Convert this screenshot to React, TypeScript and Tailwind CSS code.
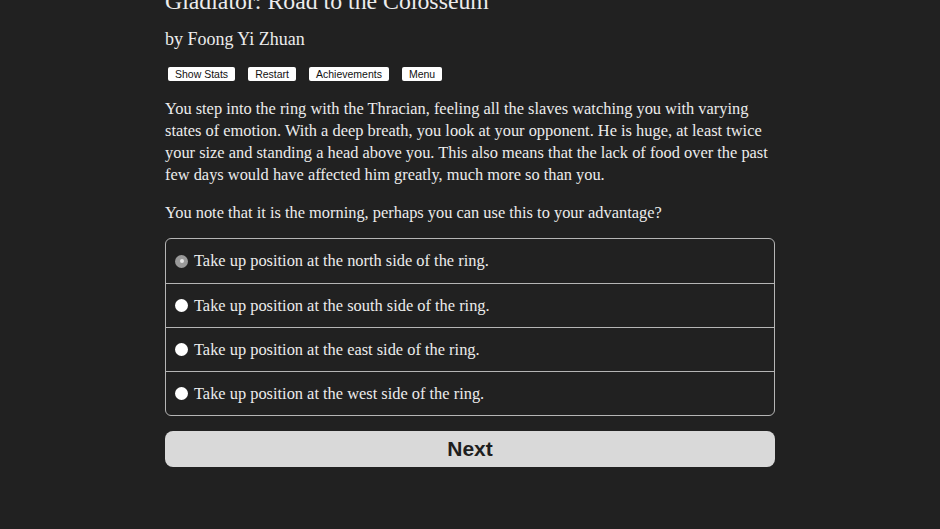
import { useState } from "react";

const options = [
    "Take up position at the north side of the ring.",
    "Take up position at the south side of the ring.",
    "Take up position at the east side of the ring.",
    "Take up position at the west side of the ring.",
];

const serif = { fontFamily: '"Liberation Serif", "DejaVu Serif", serif' };

export default function App() {
    const [selected, setSelected] = useState(0);

    return (
        <div className="w-[940px] h-[529px] overflow-hidden bg-[#212121] text-[#ececec]" style={serif}>
            <div className="w-[610px] ml-[165px] -mt-[13px]">
                <h1 className="text-[23.8px] leading-[28px]">Gladiator: Road to the Colosseum</h1>
                <h2 className="text-[18px] leading-[22px] mt-[13px]">by Foong Yi Zhuan</h2>

                {/* top buttons */}
                <div className="flex gap-[13px] mt-[17px] ml-[3px] font-['Liberation_Sans',Arial,sans-serif]">
                    {["Show Stats", "Restart", "Achievements", "Menu"].map((b) => (
                        <button
                            key={b}
                            className="bg-white text-[#111] text-[10.5px] leading-[14px] px-[7px] rounded-[2px]"
                        >
                            {b}
                        </button>
                    ))}
                </div>

                <p className="text-[16.4px] leading-[22px] mt-[17px]">
                    You step into the ring with the Thracian, feeling all the slaves watching you with varying states
                    of emotion. With a deep breath, you look at your opponent. He is huge, at least twice your size and
                    standing a head above you. This also means that the lack of food over the past few days would have
                    affected him greatly, much more so than you.
                </p>
                <p className="text-[16.4px] leading-[22px] mt-[16px]">
                    You note that it is the morning, perhaps you can use this to your advantage?
                </p>

                {/* choices */}
                <div className="mt-[14px] border border-[#b5b5b5] rounded-[6px]">
                    {options.map((o, i) => (
                        <label
                            key={o}
                            onClick={() => setSelected(i)}
                            className={`flex items-center h-[44px] pl-[9px] gap-[6px] cursor-pointer ${
                                i > 0 ? "border-t border-[#b5b5b5]" : ""
                            }`}
                        >
                            <span
                                className={`w-[13px] h-[13px] rounded-full flex items-center justify-center ${
                                    selected === i ? "bg-[#9a9a9a]" : "bg-white"
                                }`}
                            >
                                {selected === i && <span className="w-[4px] h-[4px] rounded-full bg-[#e6e6e6]" />}
                            </span>
                            <span className="text-[16.4px] leading-[22px]">{o}</span>
                        </label>
                    ))}
                </div>

                <button className="mt-[15px] w-full h-[36px] rounded-[8px] bg-[#d9d9d9] text-[#1e1e1e] text-[21px] font-bold font-['Liberation_Sans',Arial,sans-serif]">
                    Next
                </button>
            </div>
        </div>
    );
}
